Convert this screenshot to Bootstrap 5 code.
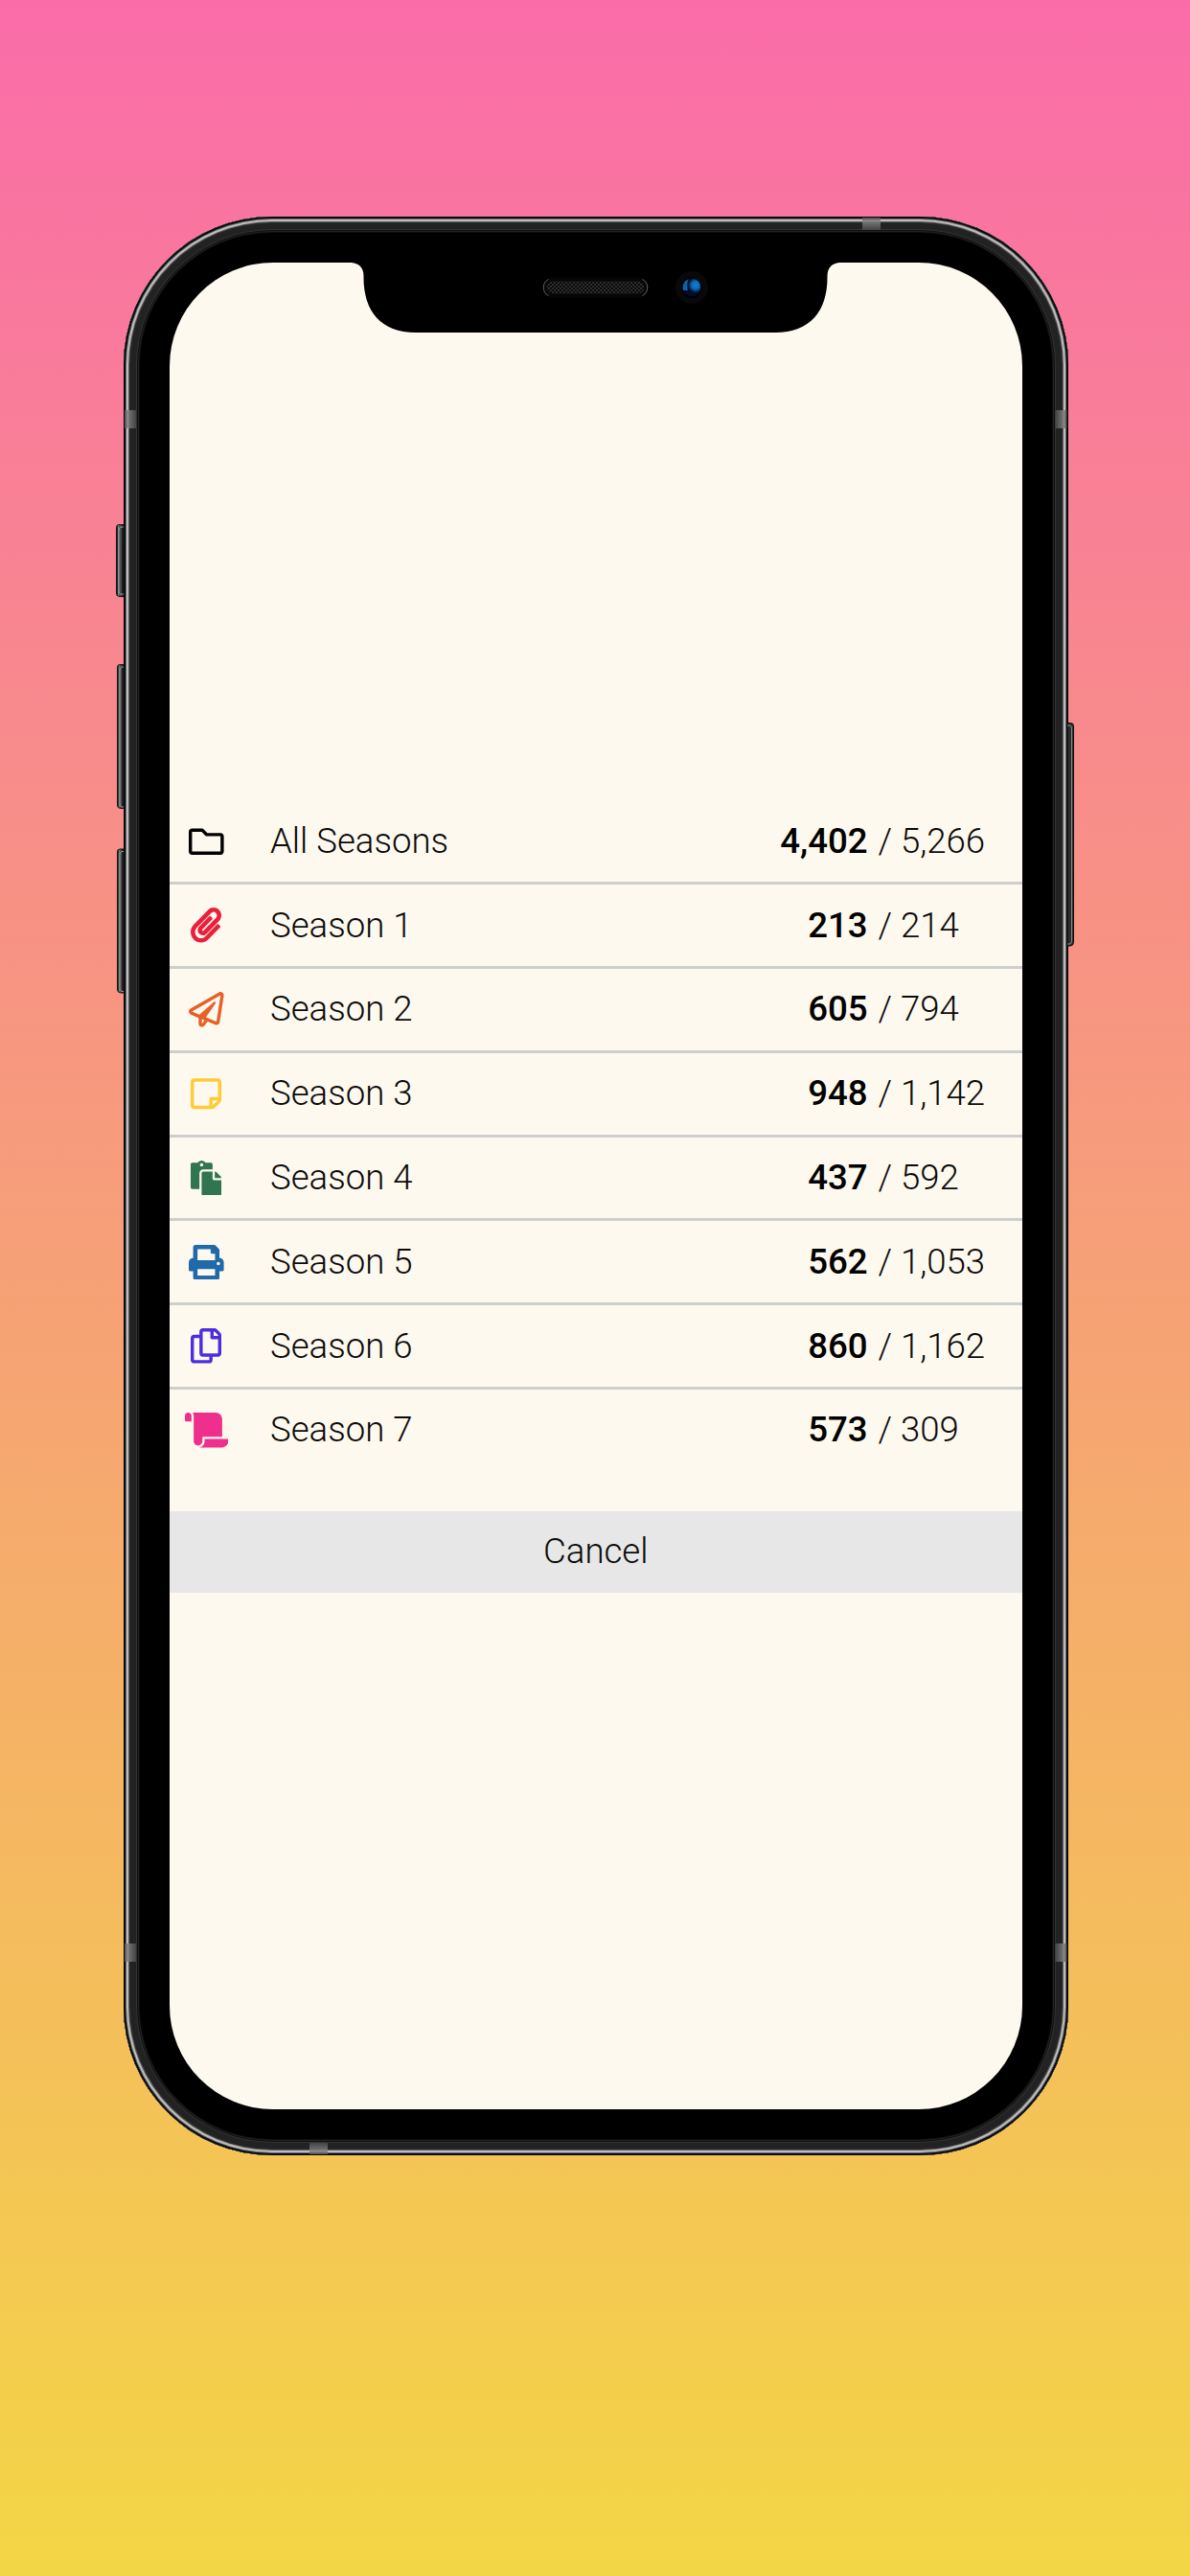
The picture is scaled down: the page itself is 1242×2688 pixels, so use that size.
<!DOCTYPE html>
<html lang="en">
<head>
<meta charset="utf-8">
<meta name="viewport" content="width=device-width, initial-scale=1">
<title>Seasons</title>
<link href="https://cdn.jsdelivr.net/npm/bootstrap@5.3.0/dist/css/bootstrap.min.css" rel="stylesheet">
<style>
html, body { height: 2688px; overflow: hidden; }
body { background: linear-gradient(180deg, #fa6ca9 0%, #f6a176 50%, #f3d645 100%); font-family: Roboto, "Liberation Sans", sans-serif; font-weight: 300; font-size: 36.6px; line-height: 44px; color: #0b0b0b; padding: 226px 0 0 129px; }
.phone { width: 985.5px; height: 2023px; padding: 48px; border-radius: 155px; background: #000;
  box-shadow: inset 0 0 0 2px #090b0c, inset 0 0 0 3px #666, inset 0 0 0 5px #bdbdbf, inset 0 0 0 6px #5c5c5e, inset 0 0 0 7px #2b2b2b, inset 0 0 0 13px #222, inset 0 0 0 14px #333, inset 0 0 0 15px #111, inset 0 0 0 16px #222, inset 0 0 0 17px #0e0e0e; }
.screen { background: #fef9ee; border-radius: 108px; overflow: hidden; padding-top: 561.5px; }
.season-row { height: 87.8px; padding-left: 15px; border-bottom: 3px solid #cecece; }
.season-row:last-child { border-bottom-color: transparent; }
.icon-cell { width: 47px; margin-right: 43px; }
.icon-cell svg { height: 36.6px; display: block; fill: currentColor; }
.got { width: 200px; font-weight: 500; text-align: right; color: #000; }
.total { width: 161px; padding-left: 11px; white-space: pre; }
.cancel-btn { height: 85px; margin-top: 39px; background: #e7e7e7; border: 0; border-radius: 0; font: inherit; color: #0b0b0b; width: 100%; }
.overlay { inset: 0; width: 985.5px; height: 2023px; overflow: visible; pointer-events: none; }
</style>
</head>
<body>
<main class="phone position-relative">
  <div class="screen h-100">
    <div>
      <div class="season-row d-flex align-items-center"><span class="icon-cell d-flex justify-content-center" style="color:#000"><svg viewBox="0 0 512 512"><path d="M464 128H272l-54.63-54.63c-6-6-14.14-9.37-22.63-9.37H48C21.49 64 0 85.49 0 112v288c0 26.51 21.49 48 48 48h416c26.51 0 48-21.49 48-48V176c0-26.51-21.49-48-48-48zm0 272H48V112h140.12l54.63 54.63c6 6 14.14 9.37 22.63 9.37H464v224z"/></svg></span><span>All Seasons</span><span class="got ms-auto">4,402</span><span class="total">/ 5,266</span></div>
      <div class="season-row d-flex align-items-center"><span class="icon-cell d-flex justify-content-center" style="color:#eb1e3c"><svg viewBox="0 0 448 512"><path d="M43.246 466.142c-58.43-60.289-57.341-157.511 1.386-217.581L254.392 34c44.316-45.332 116.351-45.336 160.671 0 43.89 44.894 43.943 117.329 0 162.276L232.214 383.128c-29.855 30.537-78.633 30.111-107.982-.998-28.275-29.97-27.368-77.473 1.452-106.953l143.743-146.835c6.182-6.314 16.312-6.422 22.626-.241l22.861 22.379c6.315 6.182 6.422 16.312.241 22.626L171.427 319.927c-4.932 5.045-5.236 13.428-.648 18.292 4.372 4.634 11.245 4.711 15.688.165l182.849-186.851c19.613-20.062 19.613-52.725-.011-72.798-19.189-19.627-49.957-19.637-69.154 0L90.39 293.295c-34.763 35.56-35.299 93.12-1.191 128.313 34.01 35.093 88.985 35.137 123.058.286l172.06-175.999c6.177-6.319 16.307-6.433 22.626-.256l22.877 22.364c6.319 6.177 6.434 16.307.256 22.626l-172.06 175.998c-59.576 60.938-155.943 60.216-214.77-.485z"/></svg></span><span>Season 1</span><span class="got ms-auto">213</span><span class="total">/ 214</span></div>
      <div class="season-row d-flex align-items-center"><span class="icon-cell d-flex justify-content-center" style="color:#e66128"><svg viewBox="0 0 512 512"><path d="M440 6.5L24 246.4c-34.4 19.9-31.1 70.8 5.7 85.9L144 379.6V464c0 46.4 59.2 65.5 86.6 28.6l43.8-59.1 111.9 46.2c5.9 2.4 12.1 3.6 18.3 3.6 8.2 0 16.3-2.1 23.6-6.2 12.8-7.2 21.6-20 23.9-34.5l59.4-387.2c6.1-40.1-36.9-68.8-71.5-48.9zM192 464v-64.6l36.6 15.1L192 464zm212.6-28.7l-153.8-63.5L391 169.5c10.7-15.5-9.5-33.5-23.7-21.2L155.8 332.6 48 288 464 48l-59.4 387.3z"/></svg></span><span>Season 2</span><span class="got ms-auto">605</span><span class="total">/ 794</span></div>
      <div class="season-row d-flex align-items-center"><span class="icon-cell d-flex justify-content-center" style="color:#ffcb37"><svg viewBox="0 0 448 512"><path d="M448 348.106V80c0-26.51-21.49-48-48-48H48C21.49 32 0 53.49 0 80v351.988c0 26.51 21.49 48 48 48h268.118a48 48 0 0 0 33.941-14.059l83.882-83.882A48 48 0 0 0 448 348.106zm-128 80v-76.118h76.118L320 428.106zM400 80v223.988H296c-13.255 0-24 10.745-24 24v104H48V80h352z"/></svg></span><span>Season 3</span><span class="got ms-auto">948</span><span class="total">/ 1,142</span></div>
      <div class="season-row d-flex align-items-center"><span class="icon-cell d-flex justify-content-center" style="color:#30754f"><svg viewBox="0 0 448 512"><path d="M128 184c0-30.879 25.122-56 56-56h136V56c0-13.255-10.745-24-24-24h-80.61C204.306 12.89 183.637 0 160 0s-44.306 12.89-55.39 32H24C10.745 32 0 42.745 0 56v336c0 13.255 10.745 24 24 24h104V184zm32-144c13.255 0 24 10.745 24 24s-10.745 24-24 24-24-10.745-24-24 10.745-24 24-24zm184 248h104v200c0 13.255-10.745 24-24 24H184c-13.255 0-24-10.745-24-24V184c0-13.255 10.745-24 24-24h136v104c0 13.2 10.8 24 24 24zm104-38.059V256h-96v-96h6.059a24 24 0 0 1 16.97 7.029l65.941 65.941a24.002 24.002 0 0 1 7.03 16.971z"/></svg></span><span>Season 4</span><span class="got ms-auto">437</span><span class="total">/ 592</span></div>
      <div class="season-row d-flex align-items-center"><span class="icon-cell d-flex justify-content-center" style="color:#216aaa"><svg viewBox="0 0 512 512"><path d="M448 192V77.25c0-8.49-3.37-16.62-9.37-22.63L393.37 9.37c-6-6-14.14-9.37-22.63-9.37H96C78.33 0 64 14.33 64 32v160c-35.35 0-64 28.65-64 64v112c0 8.84 7.16 16 16 16h48v96c0 17.67 14.33 32 32 32h320c17.67 0 32-14.33 32-32v-96h48c8.84 0 16-7.16 16-16V256c0-35.35-28.65-64-64-64zm-64 256H128v-96h256v96zm0-224H128V64h192v48c0 8.84 7.16 16 16 16h48v96zm48 72c-13.25 0-24-10.75-24-24 0-13.26 10.75-24 24-24s24 10.74 24 24c0 13.25-10.75 24-24 24z"/></svg></span><span>Season 5</span><span class="got ms-auto">562</span><span class="total">/ 1,053</span></div>
      <div class="season-row d-flex align-items-center"><span class="icon-cell d-flex justify-content-center" style="color:#4b2fdf"><svg viewBox="0 0 448 512"><path d="M433.941 65.941l-51.882-51.882A48 48 0 0 0 348.118 0H176c-26.51 0-48 21.49-48 48v48H48c-26.51 0-48 21.49-48 48v320c0 26.51 21.49 48 48 48h224c26.51 0 48-21.49 48-48v-48h80c26.51 0 48-21.49 48-48V99.882a48 48 0 0 0-14.059-33.941zM266 464H54a6 6 0 0 1-6-6V150a6 6 0 0 1 6-6h74v224c0 26.51 21.49 48 48 48h96v42a6 6 0 0 1-6 6zm128-96H182a6 6 0 0 1-6-6V54a6 6 0 0 1 6-6h106v88c0 13.255 10.745 24 24 24h88v202a6 6 0 0 1-6 6zm6-256h-64V48h9.632c1.591 0 3.117.632 4.243 1.757l48.368 48.368a6 6 0 0 1 1.757 4.243V112z"/></svg></span><span>Season 6</span><span class="got ms-auto">860</span><span class="total">/ 1,162</span></div>
      <div class="season-row d-flex align-items-center"><span class="icon-cell d-flex justify-content-center" style="color:#ee2f8b"><svg viewBox="0 0 640 512"><path d="M48 0C21.53 0 0 21.53 0 48v64c0 8.84 7.16 16 16 16h80V48C96 21.53 74.47 0 48 0zm208 412.57V352h288V96c0-52.94-43.06-96-96-96H111.59C121.74 13.41 128 29.92 128 48v368c0 38.87 34.65 69.65 74.75 63.12C234.22 474 256 444.46 256 412.57zM288 384v32c0 52.93-43.06 96-96 96h336c61.86 0 112-50.14 112-112 0-8.84-7.16-16-16-16H288z"/></svg></span><span>Season 7</span><span class="got ms-auto">573</span><span class="total">/ 309</span></div>
    </div>
    <button class="cancel-btn d-block text-center p-0" type="button">Cancel</button>
  </div>
  <!-- device hardware: notch, side keys, antenna bands -->
  <svg class="overlay position-absolute" viewBox="129 226 985.5 2023">
    <defs>
      <linearGradient id="key" x1="0" x2="1"><stop offset="0" stop-color="#111"/><stop offset=".14" stop-color="#222"/><stop offset=".24" stop-color="#8e9190"/><stop offset=".4" stop-color="#505352"/><stop offset=".68" stop-color="#474a49"/><stop offset=".82" stop-color="#161717"/><stop offset="1" stop-color="#2c2e2e"/></linearGradient>
      <linearGradient id="bandL" x1="0" x2="1"><stop offset="0" stop-color="#555"/><stop offset=".3" stop-color="#858585"/><stop offset="1" stop-color="#4a4a4a"/></linearGradient>
      <linearGradient id="bandT" x2="0" y2="1"><stop offset="0" stop-color="#555"/><stop offset=".3" stop-color="#858585"/><stop offset="1" stop-color="#4a4a4a"/></linearGradient>
      <pattern id="mesh" width="4" height="4" patternUnits="userSpaceOnUse"><rect width="4" height="4" fill="#0a0a0a"/><path d="M0 0h2v2H0zM2 2h2v2H2z" fill="#2c2c2c"/></pattern>
      <radialGradient id="lens"><stop offset="0" stop-color="#0a7fd0"/><stop offset=".5" stop-color="#0a6cb8"/><stop offset="1" stop-color="#0a6cb8" stop-opacity="0"/></radialGradient>
      <clipPath id="lensClip"><circle cx="722" cy="300" r="9.5"/></clipPath>
    </defs>
    <path d="M367 273V274C374 274.500 379.500 279 379.500 288C379 324 397 347 434 347H809C846 347 864 324 863.500 288C863.500 279 869 274.500 876 274V273Z"/>
    <rect x="568.500" y="291.500" width="106" height="17" rx="8.500" fill="url(#mesh)" stroke="#060606" stroke-width="4"/>
    <path d="M572.500 291.500a9.500 9.500 0 0 0 0 17M670.500 291.500a9.500 9.500 0 0 1 0 17" fill="none" stroke="#606060"/>
    <circle cx="722" cy="300" r="17" fill="#07090a"/><circle cx="722" cy="300" r="11" fill="#000"/>
    <g clip-path="url(#lensClip)"><circle cx="722" cy="300" r="9.500" fill="#020c28"/><path d="M711 290h8q-3 7-1 13h-7z" fill="#0864ac"/><circle cx="726" cy="297.500" r="8" fill="url(#lens)"/></g>
    <g fill="none" stroke-linejoin="round">
      <path d="M129 547.500H124q-2.500 0-2.500 3V619q0 3.500 3.500 3.500h4z" fill="url(#key)" stroke="#151515"/><path d="M129 550h-3q-2 0-2 4v62q0 4 2 4h3" stroke="#989b9a"/>
      <path d="M129 693.500H125q-2.500 0-2.500 3V840q0 3.500 3.500 3.500h3z" fill="url(#key)" stroke="#151515"/><path d="M129 696h-2q-2 0-2 4v138q0 4 2 4h2" stroke="#989b9a"/>
      <path d="M129 886H125q-2.500 0-2.500 3v143q0 4 3.500 4h3z" fill="url(#key)" stroke="#151515"/><path d="M129 888.500h-2q-2 0-2 4v138q0 4 2 4h2" stroke="#989b9a"/>
      <path d="M1114 754.500h3.500q3 0 3 3V983q0 4-3.500 4h-3z" fill="#2b2d2d" stroke="#0d0f0f"/><path d="M1114 757h3q1.500 0 1.500 4v220q0 4-1.500 4h-3" stroke="#898c8c"/>
    </g>
    <g opacity=".85">
      <rect x="130" y="428" width="12" height="19" fill="url(#bandL)"/><rect x="130" y="2028" width="12" height="19" fill="url(#bandL)"/>
      <rect x="-1113.500" y="428" width="12" height="19" fill="url(#bandL)" transform="scale(-1 1)"/><rect x="-1113.500" y="2028" width="12" height="19" fill="url(#bandL)" transform="scale(-1 1)"/>
      <rect x="900" y="227" width="19" height="13" fill="url(#bandT)"/><rect x="323" y="-2248" width="19" height="12" fill="url(#bandT)" transform="scale(1 -1)"/>
    </g>
  </svg>
</main>
<script src="https://cdn.jsdelivr.net/npm/bootstrap@5.3.0/dist/js/bootstrap.bundle.min.js"></script>
</body>
</html>
